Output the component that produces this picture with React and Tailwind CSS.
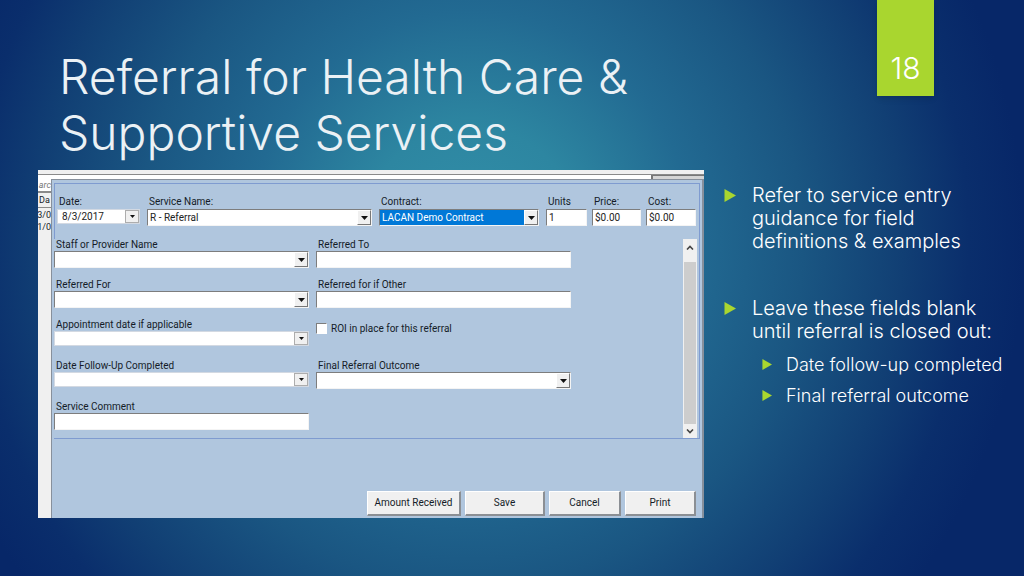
const inset =
  "w-full rounded-none border border-t-[#7d7d7d] border-l-[#7d7d7d] border-r-[#f4f4f4] border-b-[#f4f4f4] text-[10px] leading-3 outline-none";

function Caret() {
  return (
    <svg width="7" height="4" viewBox="0 0 7 4" aria-hidden="true">
      <path d="M0 0h7L3.5 4z" fill="#111" />
    </svg>
  );
}

function Field({ id, label, className = "", children }) {
  return (
    <div className={`flex flex-col ${className}`}>
      <label htmlFor={id} className="h-3 whitespace-nowrap pl-0.5 text-[10px] leading-3">
        {label}
      </label>
      {children}
    </div>
  );
}

function TextField({ id, label, value = "", className }) {
  return (
    <Field id={id} label={label} className={className}>
      <input
        id={id}
        type="text"
        defaultValue={value}
        className={`${inset} h-[17px] bg-white px-0.5 text-[#222]`}
      />
    </Field>
  );
}

function SelectField({ id, label, value = "", className, selected }) {
  return (
    <Field id={id} label={label} className={className}>
      <div className="relative flex">
        <select
          id={id}
          className={`${inset} h-[17px] appearance-none pl-0.5 ${
            selected ? "bg-[#0078d7] text-white" : "bg-white text-[#222]"
          }`}
        >
          <option>{value}</option>
        </select>
        <span className="pointer-events-none absolute top-px right-px bottom-px flex w-3.5 items-center justify-center border border-t-white border-r-[#777] border-b-[#777] border-l-white bg-[#f0f0f0]">
          <Caret />
        </span>
      </div>
    </Field>
  );
}

function DateField({ id, label, value = "", className }) {
  return (
    <Field id={id} label={label} className={className}>
      <div className="flex h-[15px] border border-[#d3d9e2] bg-white">
        <input
          id={id}
          type="text"
          defaultValue={value}
          className="w-full min-w-0 bg-white px-1 text-[10px] leading-3 text-[#222] outline-none"
        />
        <button
          type="button"
          aria-label={`Open calendar: ${label}`}
          className="flex w-3.5 shrink-0 items-center justify-center border border-[#adadad] bg-[#f0f0f0]"
        >
          <svg width="5" height="3" viewBox="0 0 5 3" aria-hidden="true">
            <path d="M0 0h5L2.5 3z" fill="#111" />
          </svg>
        </button>
      </div>
    </Field>
  );
}

function DialogButton({ className, children }) {
  return (
    <button
      type="button"
      className={`h-[25px] whitespace-nowrap border border-t-white border-l-white border-r-2 border-b-2 border-r-[#8b8f94] border-b-[#8b8f94] bg-[#f0f0f0] text-[10px] leading-3 ${className}`}
    >
      {children}
    </button>
  );
}

function Bullet({ small, children }) {
  return (
    <div className={small ? "flex gap-[14px] pl-[38px] text-[18px]" : "flex gap-4 text-[20px]"}>
      <svg
        className={small ? "mt-1.5 shrink-0" : "mt-[5px] shrink-0"}
        width={small ? 10 : 12}
        height={small ? 11 : 13}
        viewBox="0 0 12 13"
        preserveAspectRatio="none"
        aria-hidden="true"
      >
        <path d="M0.500 0L12 6.500L0.500 13z" fill="#a9d62f" />
      </svg>
      <p>{children}</p>
    </div>
  );
}

function ServiceDialog() {
  return (
    <section
      aria-label="Referral service entry"
      className="flex h-[348px] min-w-0 flex-1 flex-col overflow-hidden bg-[#f0f0f0] font-['Roboto','Liberation_Sans',sans-serif] font-normal text-[#141c28]"
    >
      <div className="mt-1 flex h-[5px] shrink-0 border-t border-[#8a8a8a] bg-white">
        <div className="ml-auto w-[53px] border-t border-l-2 border-[#777] bg-[#d5d5d5]" />
      </div>
      <div className="flex min-h-0 flex-1">
        <div className="flex w-[13px] shrink-0 flex-col text-[9px] leading-3">
          <div className="flex h-[14px] justify-end border-b-2 border-[#8a8a8a] bg-white text-[#777] italic">
            arc
          </div>
          <div className="mb-px h-[15px] border-b border-[#8a8a8a] pt-px pl-px">Da</div>
          <div className="flex justify-end">3/0</div>
          <div className="flex justify-end">1/0</div>
        </div>
        <div className="flex min-w-0 flex-1 flex-col border-t border-r-2 border-l border-[#87909c] bg-[#b0c6de] pt-[3px] pr-0.5 pl-0.5">
          <div className="flex flex-col border-t border-r border-b border-[#7f9bd0]">
            <div className="flex h-[55px] items-start gap-[7px] border-l border-[#7f9bd0] pt-3 pr-[3px] pl-0.5">
              <DateField id="date" label="Date:" value="8/3/2017" className="w-[83px] gap-px" />
              <SelectField id="service" label="Service Name:" value="R - Referral" className="min-w-0 flex-1 gap-px" />
              <SelectField id="contract" label="Contract:" value="LACAN Demo Contract" selected className="w-40 gap-px" />
              <div className="flex gap-[5px]">
                <TextField id="units" label="Units" value="1" className="w-[41px] gap-px" />
                <TextField id="price" label="Price:" value="$0.00" className="w-[49px] gap-px" />
                <TextField id="cost" label="Cost:" value="$0.00" className="w-[50px] gap-px" />
              </div>
            </div>
            <div className="flex h-[199px]">
              <div className="grid min-w-0 flex-1 grid-cols-2 grid-rows-[40px_40px_41px_41px_30px] content-start gap-x-[7px] pr-28">
                <SelectField id="staff" label="Staff or Provider Name" />
                <TextField id="referred-to" label="Referred To" />
                <SelectField id="referred-for" label="Referred For" />
                <TextField id="referred-other" label="Referred for if Other" />
                <DateField id="appointment" label="Appointment date if applicable" />
                <div className="flex items-start gap-1 pt-1">
                  <input
                    id="roi"
                    type="checkbox"
                    className="size-[11px] appearance-none border border-t-[#7d7d7d] border-r-white border-b-white border-l-[#7d7d7d] bg-white"
                  />
                  <label htmlFor="roi" className="text-[10px] leading-3">
                    ROI in place for this referral
                  </label>
                </div>
                <DateField id="follow-up" label="Date Follow-Up Completed" />
                <SelectField id="outcome" label="Final Referral Outcome" />
                <TextField id="comment" label="Service Comment" />
              </div>
              <div className="mr-0.5 flex w-3.5 shrink-0 flex-col bg-[#f0f0f0]">
                <button type="button" aria-label="Scroll up" className="flex h-[23px] justify-center pt-1.5">
                  <svg width="8" height="5" viewBox="0 0 8 5" aria-hidden="true">
                    <path d="M1 4.500L4 1.500L7 4.500" fill="none" stroke="#444" strokeWidth="1.600" />
                  </svg>
                </button>
                <div className="mx-px flex-1 bg-[#cdcdcd]" />
                <button type="button" aria-label="Scroll down" className="flex h-3.5 items-center justify-center">
                  <svg width="8" height="5" viewBox="0 0 8 5" aria-hidden="true">
                    <path d="M1 0.500L4 3.500L7 0.500" fill="none" stroke="#444" strokeWidth="1.600" />
                  </svg>
                </button>
              </div>
            </div>
          </div>
          <div className="mt-auto flex justify-end gap-1 pr-1 pb-0.5">
            <DialogButton className="w-[94px]">Amount Received</DialogButton>
            <DialogButton className="w-20">Save</DialogButton>
            <DialogButton className="w-[72px]">Cancel</DialogButton>
            <DialogButton className="w-[71px]">Print</DialogButton>
          </div>
        </div>
      </div>
    </section>
  );
}

export default function App() {
  return (
    <div className="min-h-screen overflow-hidden bg-[radial-gradient(ellipse_54%_100%_at_46%_42%,#328fa9_0%,#2d86a1_20%,#226a92_40%,#1a5682_60%,#113f74_78%,#0a2e6c_90%,#072768_100%)] font-['Inter','Lato',sans-serif] font-light text-white">
      <header className="flex h-[170px] items-start justify-between pr-[90px] pl-[59px]">
        <h1 className="pt-[49px] text-[48px] leading-[56px] text-[#ebf1f5]">
          Referral for Health Care &amp;
          <br />
          Supportive Services
        </h1>
        <div className="flex h-24 w-[57px] items-end justify-center bg-[#a9d62f] pb-2.5 text-[30px] leading-9 shadow-md">
          18
        </div>
      </header>
      <main className="flex items-start pl-[38px]">
        <ServiceDialog />
        <aside className="flex w-80 shrink-0 flex-col pt-3.5 pl-5 leading-[23px] whitespace-nowrap">
          <Bullet>
            Refer to service entry
            <br />
            guidance for field
            <br />
            definitions &amp; examples
          </Bullet>
          <div className="mt-11">
            <Bullet>
              Leave these fields blank
              <br />
              until referral is closed out:
            </Bullet>
          </div>
          <div className="mt-2.5 flex flex-col gap-2">
            <Bullet small>Date follow-up completed</Bullet>
            <Bullet small>Final referral outcome</Bullet>
          </div>
        </aside>
      </main>
    </div>
  );
}
